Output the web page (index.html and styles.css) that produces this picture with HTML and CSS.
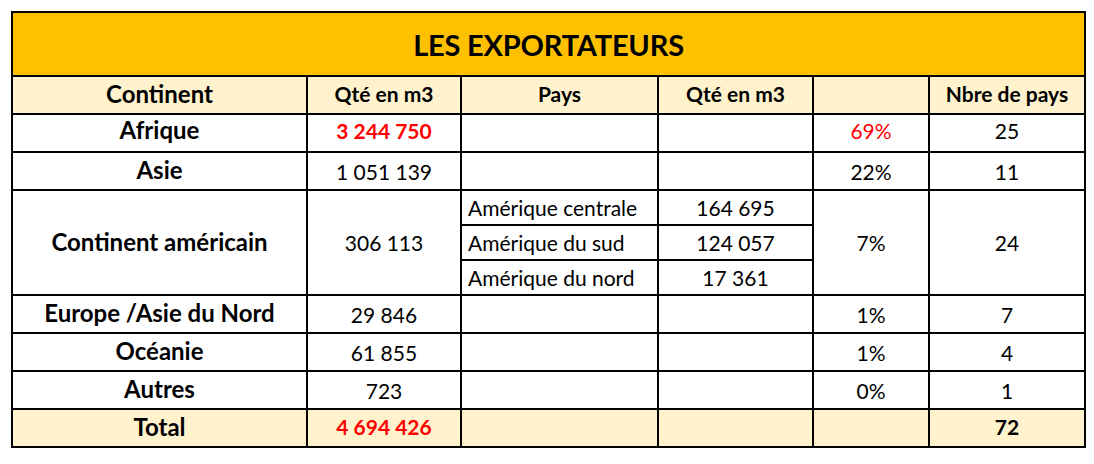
FILE: index.html
```html
<!DOCTYPE html>
<html lang="fr">
<head>
<meta charset="utf-8">
<title>Les exportateurs</title>
<link rel="stylesheet" href="styles.css">
</head>
<body>
<table class="grid">
  <colgroup>
    <col class="c1"><col class="c2"><col class="c3"><col class="c4"><col class="c5"><col class="c6">
  </colgroup>
  <tr class="title-row"><td colspan="6" class="title">LES EXPORTATEURS</td></tr>
  <tr class="head-row">
    <th class="head-first">Continent</th><th>Qté en m3</th><th>Pays</th><th>Qté en m3</th><th></th><th>Nbre de pays</th>
  </tr>
  <tr class="row raised">
    <td class="name">Afrique</td><td class="red bold">3 244 750</td><td></td><td></td><td class="red">69%</td><td>25</td>
  </tr>
  <tr class="row">
    <td class="name">Asie</td><td>1 051 139</td><td></td><td></td><td>22%</td><td>11</td>
  </tr>
  <tr class="sub">
    <td class="name" rowspan="3">Continent américain</td><td rowspan="3">306 113</td><td class="pays">Amérique centrale</td><td>164 695</td><td rowspan="3">7%</td><td rowspan="3">24</td>
  </tr>
  <tr class="sub">
    <td class="pays">Amérique du sud</td><td>124 057</td>
  </tr>
  <tr class="sub">
    <td class="pays">Amérique du nord</td><td>17 361</td>
  </tr>
  <tr class="row">
    <td class="name">Europe /Asie du Nord</td><td>29 846</td><td></td><td></td><td>1%</td><td>7</td>
  </tr>
  <tr class="row">
    <td class="name">Océanie</td><td>61 855</td><td></td><td></td><td>1%</td><td>4</td>
  </tr>
  <tr class="row">
    <td class="name">Autres</td><td>723</td><td></td><td></td><td>0%</td><td>1</td>
  </tr>
  <tr class="row total">
    <td class="name">Total</td><td class="red bold">4 694 426</td><td></td><td></td><td></td><td class="bold">72</td>
  </tr>
</table>
</body>
</html>
```

FILE: styles.css
```css
html, body {
  margin: 0;
  background: #fff;
}
body {
  padding: 11px 10px 0 11px;
  font-family: "Lato", "Open Sans", sans-serif;
  color: #000;
}
.grid {
  border-collapse: collapse;
  table-layout: fixed;
  width: 1073px;
}
.c1 { width: 295px; }
.c2 { width: 154px; }
.c3 { width: 197px; }
.c4 { width: 155px; }
.c5 { width: 116px; }
.c6 { width: 156px; }
.grid td, .grid th {
  border: 2px solid #000;
  padding: 0 4px;
  text-align: center;
  vertical-align: middle;
  font-size: 21px;
  font-weight: 400;
  white-space: nowrap;
  line-height: 1;
}
.title-row { height: 64px; }
.grid .title {
  background: #ffc000;
  font-size: 29px;
  font-weight: 700;
  letter-spacing: -0.2px;
}
.head-row { height: 38px; }
.grid .head-row th {
  background: #fff2cc;
  font-weight: 700;
  padding-bottom: 3px;
}
.grid .head-row th.head-first { font-size: 24px; }
.row { height: 38px; }
.sub { height: 35px; }
.grid .name {
  font-weight: 700;
  font-size: 24px;
  padding-bottom: 2px;
}
.grid .bold { font-weight: 700; }
.red { color: #ff0000; }
.grid .raised td { padding-bottom: 6px; }
.grid .total td { padding-bottom: 3px; }
.grid td.pays {
  text-align: left;
  padding-left: 6px;
}
.total td { background: #fff2cc; }
```
